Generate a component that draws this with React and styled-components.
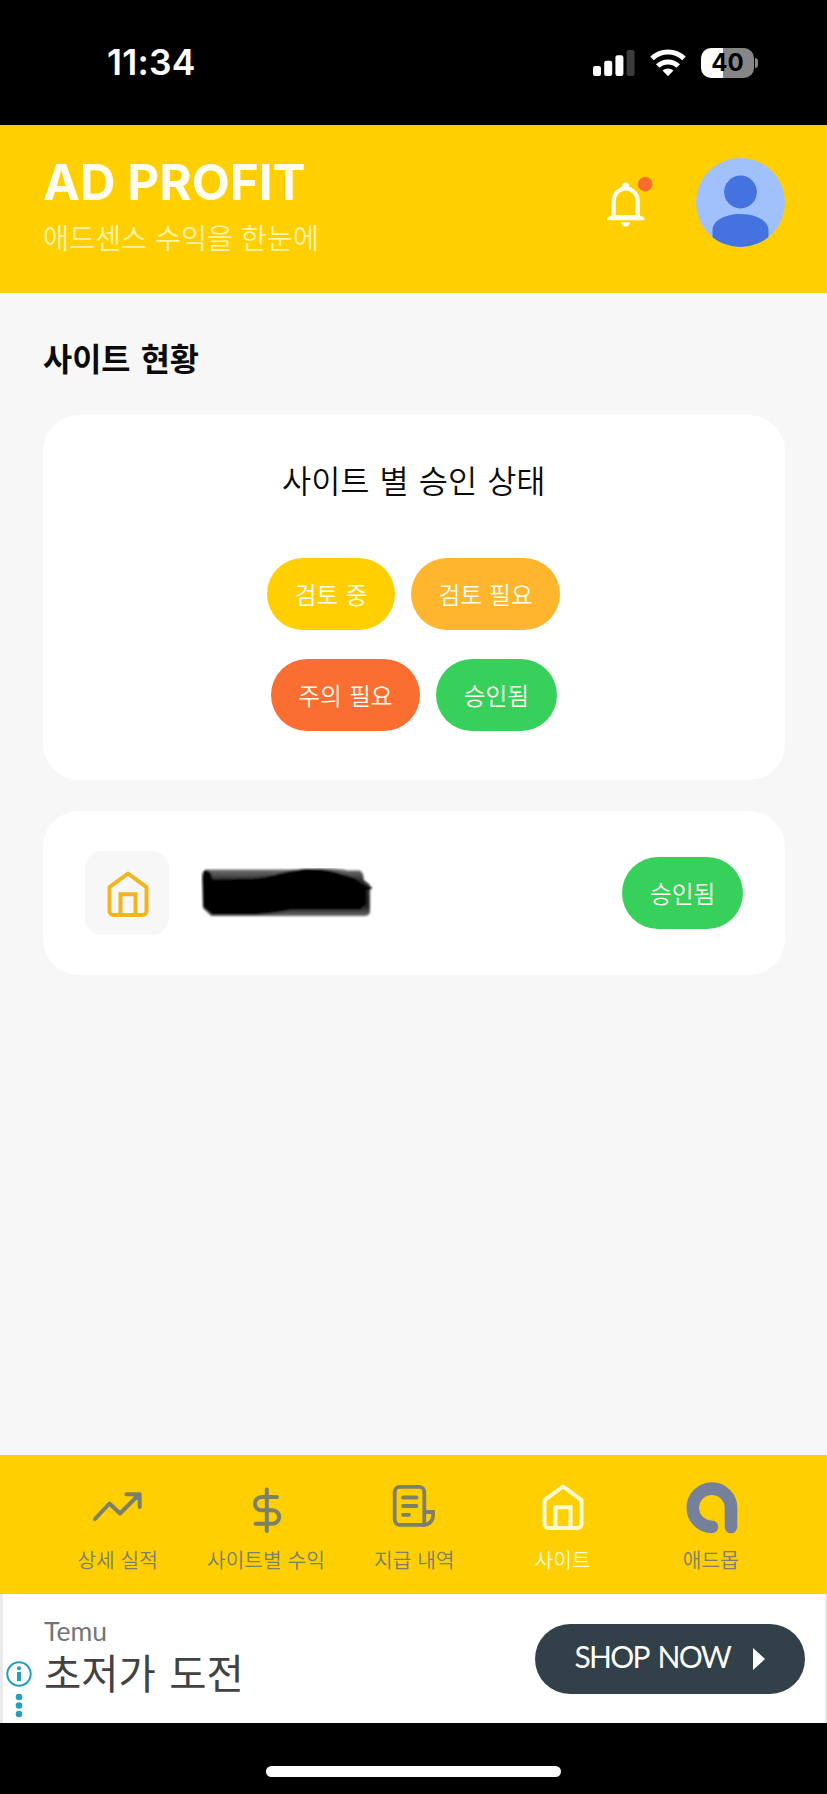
import React from 'react';
import styled, { createGlobalStyle } from 'styled-components';

const yellow = '#ffcf01';
const green = '#37d05b';
const muted = '#7d8069';

const GlobalStyle = createGlobalStyle`
  * {
    box-sizing: border-box;
  }

  body {
    margin: 0;
    background-color: #f7f7f7;
    font-family: Inter, 'Noto Sans CJK KR', sans-serif;
  }

  svg {
    display: block;
    flex-shrink: 0;
  }
`;

const Screen = styled.div`
  display: flex;
  flex-direction: column;
  width: 827px;
  height: 1794px;
  overflow: hidden;
`;

const StatusBar = styled.div`
  display: flex;
  align-items: center;
  justify-content: space-between;
  height: 125px;
  padding: 0 69px 0 107px;
  background-color: black;
`;

const Time = styled.span`
  color: white;
  font-size: 35.5px;
  font-weight: 600;
  line-height: 40px;
  letter-spacing: 0.2px;
`;

const StatusIcons = styled.div`
  display: flex;
  align-items: center;
  gap: 15px;
`;

const Battery = styled.div`
  display: flex;
  align-items: center;
  gap: 1px;
`;

const BatteryLevel = styled.div`
  width: 53px;
  height: 30px;
  border-radius: 10px;
  background: linear-gradient(to right, white 41%, #868686 41%);
  color: black;
  font-size: 24px;
  font-weight: 700;
  line-height: 30px;
  text-align: center;
`;

const BatteryNub = styled.div`
  width: 3px;
  height: 10px;
  border-radius: 0 4px 4px 0;
  background-color: #868686;
`;

const Header = styled.header`
  display: flex;
  align-items: center;
  justify-content: space-between;
  height: 168px;
  padding: 0 42px 13px 43px;
  background-color: ${yellow};
`;

const Brand = styled.h1`
  margin: 5px 0 0;
  color: #fffdf0;
  font-size: 49.4px;
  font-weight: 700;
  line-height: 58px;
`;

const Tagline = styled.p`
  margin: 6px 0 0;
  color: #fff3a8;
  font-family: 'Noto Sans CJK KR', sans-serif;
  font-size: 28.3px;
  font-weight: 350;
  line-height: 40px;
  word-spacing: 1.5px;
`;

const HeaderActions = styled.div`
  display: flex;
  align-items: center;
  gap: 43px;
`;

const Content = styled.main`
  flex: 1;
  padding: 40px 42.5px 0 43px;
`;

const SectionTitle = styled.h2`
  margin: 0 0 34px;
  color: #0b0b0b;
  font-family: 'Noto Sans CJK KR', sans-serif;
  font-size: 31.7px;
  font-weight: 700;
  line-height: 48px;
  word-spacing: 3px;
`;

const Card = styled.section`
  border-radius: 36px;
  background-color: white;
`;

const StatusCard = styled(Card)`
  height: 365px;
  padding-top: 40px;
`;

const CardTitle = styled.h3`
  margin: 0 0 55px;
  color: #0b0b0b;
  font-family: 'Noto Sans CJK KR', sans-serif;
  font-size: 31.7px;
  font-weight: 350;
  line-height: 48px;
  text-align: center;
  word-spacing: 3px;
`;

const BadgeRow = styled.div`
  display: flex;
  justify-content: center;
  gap: 16px;
  margin-bottom: 29px;
`;

const Badge = styled.span`
  height: 72px;
  padding: 0 27.6px;
  border-radius: 36px;
  background-color: ${({ $color }) => $color};
  color: #fffdf2;
  font-family: 'Noto Sans CJK KR', sans-serif;
  font-size: 23.7px;
  font-weight: 350;
  line-height: 72px;
  white-space: nowrap;
  word-spacing: 1.8px;
`;

const SiteCard = styled(Card)`
  display: flex;
  align-items: center;
  height: 164px;
  margin-top: 31px;
  padding: 0 41.5px 0 42px;

  ${Badge} {
    margin-left: auto;
  }
`;

const SiteIcon = styled.div`
  display: flex;
  align-items: center;
  justify-content: center;
  width: 84px;
  height: 84px;
  margin-right: 32px;
  padding: 2px 0 0 2px;
  border-radius: 17px;
  background-color: #f7f7f7;
  color: #f3b51f;
`;

const TabBar = styled.nav`
  display: grid;
  grid-template-columns: repeat(5, 1fr);
  height: 139px;
  padding: 25px 42px 0 43.5px;
  background-color: ${yellow};
`;

const Tab = styled.div`
  display: flex;
  flex-direction: column;
  align-items: center;
  gap: 9.5px;
  color: ${({ $active }) => ($active ? '#fffbd0' : muted)};
`;

const TabLabel = styled.span`
  font-family: 'Noto Sans CJK KR', sans-serif;
  font-size: 20.3px;
  font-weight: 350;
  line-height: 30px;
  white-space: nowrap;
  word-spacing: 1.3px;
`;

const AdBanner = styled.aside`
  display: flex;
  align-items: center;
  justify-content: space-between;
  height: 129px;
  padding: 0 20px 0 3px;
  border-left: 3px solid #e9e9eb;
  border-right: 2px solid #e9e9eb;
  background-color: white;
`;

const AdInfo = styled.div`
  display: flex;
  gap: 12px;
  padding-top: 16px;
`;

const AdMarks = styled.div`
  padding-top: 45px;
`;

const Advertiser = styled.div`
  color: #757575;
  font-family: Lato, sans-serif;
  font-size: 26.5px;
  line-height: 32px;
`;

const AdHeadline = styled.div`
  margin-top: 1px;
  color: #424242;
  font-family: Lato, 'Noto Sans CJK KR', sans-serif;
  font-size: 40.5px;
  line-height: 52px;
  word-spacing: 3px;
`;

const ShopButton = styled.button`
  display: flex;
  align-items: center;
  width: 270.5px;
  height: 70px;
  padding: 0 0 0 40px;
  border: none;
  border-radius: 35px;
  background-color: #324049;
  color: white;
  font-family: Lato, sans-serif;
  font-size: 30px;
  line-height: 36px;
  letter-spacing: -1.7px;
  word-spacing: 3.5px;
  white-space: nowrap;
`;

const ShopText = styled.span`
  width: 178px;
  padding-bottom: 5px;
  text-align: left;
`;

const HomeArea = styled.footer`
  display: flex;
  justify-content: center;
  height: 71px;
  padding-top: 43px;
  background-color: black;
`;

const HomeIndicator = styled.div`
  width: 295px;
  height: 11px;
  border-radius: 6px;
  background-color: white;
`;

const SignalIcon = () => (
  <svg width="42" height="28" viewBox="0 0 42 28" fill="white">
    <rect x="0" y="17" width="8" height="10" rx="2.2" />
    <rect x="11.2" y="11.8" width="8" height="15.2" rx="2.2" />
    <rect x="22.4" y="6.3" width="8" height="20.7" rx="2.2" />
    <rect x="33.6" y="1" width="8" height="26" rx="2.2" fill="#3b3b3b" />
  </svg>
);

const WifiIcon = () => (
  <svg width="36" height="28" viewBox="0 0 36 28">
    <g fill="none" stroke="white" strokeWidth="5">
      <path d="M2 9.5a23 23 0 0 1 32 0" />
      <path d="M7.7 17a15 15 0 0 1 20.6 0" />
    </g>
    <path d="M12.5 21.5a8.7 8.7 0 0 1 11 0L18 27.2z" fill="white" />
  </svg>
);

const BellIcon = () => (
  <svg width="46" height="54" viewBox="0 -2 46 54">
    <path d="M6.7 39V23a12 12.5 0 0 1 24 0v16" fill="none" stroke="#fffdf0" strokeWidth="4.2" />
    <g fill="#fffdf0">
      <circle cx="18.7" cy="8.2" r="3.7" />
      <path d="M0 42.3v-2.3l5-3h27.400l5 3v2.3z" />
      <path d="M14.2 44.300h9c-1 6-8 6-9 0z" />
    </g>
    <circle cx="38.2" cy="6.2" r="7.3" fill="#fa6c2f" />
  </svg>
);

const Avatar = () => (
  <svg width="89" height="89" viewBox="0 0 89 89">
    <clipPath id="avatar">
      <circle cx="44.5" cy="44.5" r="44.5" />
    </clipPath>
    <g clipPath="url(#avatar)" fill="#4472df">
      <rect width="89" height="89" fill="#a0c1fb" />
      <circle cx="44.5" cy="34" r="16.4" />
      <path d="M16.5 89V72c0-9 12-16 28-16s28 7 28 16v17z" />
    </g>
  </svg>
);

const HomeIcon = () => (
  <svg width="54" height="54" viewBox="0 0 54 54" fill="none" stroke="currentColor" strokeWidth="4" strokeLinejoin="round">
    <path d="M27 6.5 8.5 20.2V44a4 4 0 0 0 4 4h29a4 4 0 0 0 4-4V20.2z" />
    <path d="M19.5 48V27.3h15V48" strokeLinejoin="miter" />
  </svg>
);

const TrendIcon = () => (
  <svg width="54" height="54" viewBox="0 0 54 54" fill="none" stroke="currentColor" strokeWidth="4" strokeLinecap="round" strokeLinejoin="round">
    <path d="M4 39 18.5 23.5 29 33.5 48 14.5" />
    <path d="M35.5 14.3h13.2V27" />
    <path d="M41.5 15h7v7z" fill="#6f7f92" stroke="none" />
  </svg>
);

const DollarIcon = () => (
  <svg width="54" height="54" viewBox="0 0 54 54" fill="none" stroke="currentColor" strokeWidth="4" strokeLinecap="round">
    <path d="M27.8 9.5v41.5" />
    <path d="M38 17.1H22.5a6.6 6.6 0 0 0 0 13.200h11a6.7 6.7 0 0 1 0 13.400H16.5" />
  </svg>
);

const ReceiptIcon = () => (
  <svg width="54" height="54" viewBox="0 0 54 54" fill="none" stroke="currentColor" strokeWidth="3.8" strokeLinecap="round" strokeLinejoin="round">
    <path d="M37.3 44.800H12.7a5 5 0 0 1-5-5V11.9a5 5 0 0 1 5-5h19.6a5 5 0 0 1 5 5z" />
    <path d="M37.3 32H46v4a8.8 8.8 0 0 1-8.7 8.8" strokeLinejoin="miter" />
    <path d="M16 17.500h13.500M16 26h13.500M16 34.800h6" />
  </svg>
);

const AdmobIcon = () => (
  <svg width="54" height="54" viewBox="0 0 54 54" fill="none" stroke="#75809a" strokeWidth="12.6" strokeLinecap="round">
    <path d="M28 46.800A19.1 19.1 0 1 1 47 27.7V47" />
  </svg>
);

// name of the site, painted over with a marker
const Redaction = () => (
  <svg width="172" height="50" viewBox="0 0 168 50" preserveAspectRatio="none">
    <defs>
      <filter id="soft">
        <feGaussianBlur stdDeviation="0.8" />
      </filter>
      <linearGradient id="marker" x1="0" y1="0" x2="0" y2="1">
        <stop offset="0" stopColor="#777" />
        <stop offset="0.25" stopColor="#303030" />
        <stop offset="0.8" stopColor="#222" />
        <stop offset="1" stopColor="#686868" />
      </linearGradient>
    </defs>
    <g filter="url(#soft)">
      <path d="M6 1.500H98C116 0 135 0 143 2.500H155Q159 4 159 12L165 17V44Q165 47.500 160 48H10L2 40 1 8Q2 2 6 1.500z" fill="url(#marker)" />
      <path d="M5 2q6 2 6 9l40-.5C75 8 84 1 108 1c20 0 29 5 42 9l11 8 6 1-.5 2-5 1V35l-6 7H87c-18 4-32 5-48 5H11L2 38V13C1 6 2 2 5 2z" fill="black" />
    </g>
  </svg>
);

const AdChoicesIcon = () => (
  <svg width="26" height="58" viewBox="0 0 26 58" fill="#219fbe">
    <circle cx="13" cy="14" r="11.7" fill="none" stroke="#219fbe" strokeWidth="2" />
    <circle cx="13" cy="8.3" r="2" />
    <path d="M11 12h4v9h-4z" />
    <circle cx="13" cy="37" r="3.3" />
    <circle cx="13" cy="45.5" r="3.3" />
    <circle cx="13" cy="54" r="3.3" />
  </svg>
);

const PlayIcon = () => (
  <svg width="12" height="22" viewBox="0 0 12 22" fill="white">
    <path d="M0 0 12 11 0 22z" />
  </svg>
);

const badgeRows = [
  [
    { label: '검토 중', color: yellow },
    { label: '검토 필요', color: '#ffb62f' },
  ],
  [
    { label: '주의 필요', color: '#fa6f31' },
    { label: '승인됨', color: green },
  ],
];

const tabs = [
  { label: '상세 실적', Icon: TrendIcon },
  { label: '사이트별 수익', Icon: DollarIcon },
  { label: '지급 내역', Icon: ReceiptIcon },
  { label: '사이트', Icon: HomeIcon, active: true },
  { label: '애드몹', Icon: AdmobIcon },
];

const App = () => {
  return (
    <Screen>
      <GlobalStyle />
      <StatusBar>
        <Time>11:34</Time>
        <StatusIcons>
          <SignalIcon />
          <WifiIcon />
          <Battery>
            <BatteryLevel>40</BatteryLevel>
            <BatteryNub />
          </Battery>
        </StatusIcons>
      </StatusBar>

      <Header>
        <div>
          <Brand>AD PROFIT</Brand>
          <Tagline>애드센스 수익을 한눈에</Tagline>
        </div>
        <HeaderActions>
          <BellIcon />
          <Avatar />
        </HeaderActions>
      </Header>

      <Content>
        <SectionTitle>사이트 현황</SectionTitle>
        <StatusCard>
          <CardTitle>사이트 별 승인 상태</CardTitle>
          {badgeRows.map((row, i) => (
            <BadgeRow key={i}>
              {row.map(({ label, color }) => (
                <Badge key={label} $color={color}>
                  {label}
                </Badge>
              ))}
            </BadgeRow>
          ))}
        </StatusCard>
        <SiteCard>
          <SiteIcon>
            <HomeIcon />
          </SiteIcon>
          <Redaction />
          <Badge $color={green}>승인됨</Badge>
        </SiteCard>
      </Content>

      <TabBar>
        {tabs.map(({ label, Icon, active }) => (
          <Tab key={label} $active={active}>
            <Icon />
            <TabLabel>{label}</TabLabel>
          </Tab>
        ))}
      </TabBar>

      <AdBanner>
        <AdInfo>
          <AdMarks>
            <AdChoicesIcon />
          </AdMarks>
          <div>
            <Advertiser>Temu</Advertiser>
            <AdHeadline>초저가 도전</AdHeadline>
          </div>
        </AdInfo>
        <ShopButton>
          <ShopText>SHOP NOW</ShopText>
          <PlayIcon />
        </ShopButton>
      </AdBanner>

      <HomeArea>
        <HomeIndicator />
      </HomeArea>
    </Screen>
  );
};

export default App;
